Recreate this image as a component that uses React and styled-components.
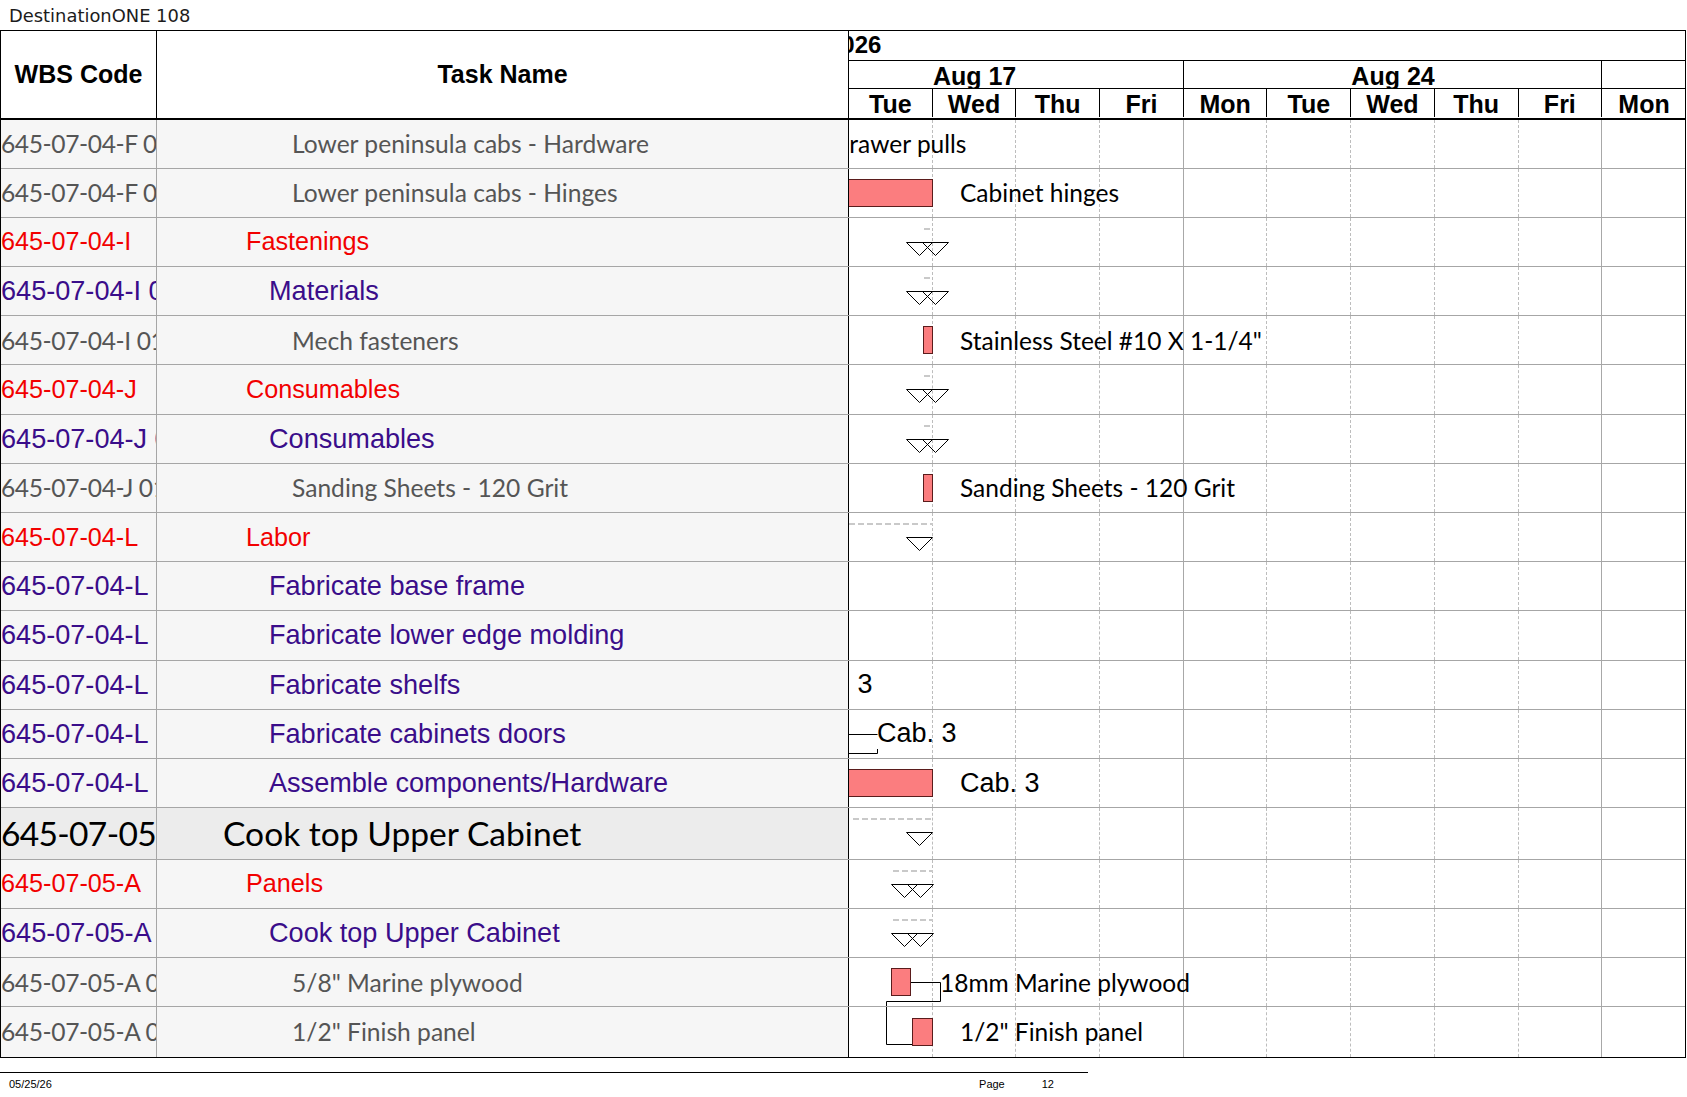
import React from "react";
import styled, { createGlobalStyle, css } from "styled-components";

const DAY = 83.7;
const CAL = `"Lato", "Liberation Sans", sans-serif`;
const ARIAL = `"Liberation Sans", Arial, sans-serif`;

const GlobalStyle = createGlobalStyle`
  html, body { margin: 0; padding: 0; background: #fff; }
  body { width: 1687px; height: 1097px; overflow: hidden; }
  *, *::before, *::after { box-sizing: border-box; }
`;

const LEVEL = {
  big: css`font-family: ${CAL}; font-size: 33.6px; color: #000;`,
  red: css`font-family: ${ARIAL}; font-size: 25.2px; color: #f20000;`,
  purple: css`font-family: ${ARIAL}; font-size: 27.1px; color: #3a0d8a;`,
  grey: css`font-family: ${CAL}; font-size: 24.6px; color: #555;`,
};
const INDENT = { big: 66, red: 89, purple: 112, grey: 135 };
const WBS_SPACING = { big: "-0.7px", red: "0", purple: "0", grey: "-0.4px" };

const Page = styled.div`
  display: flex;
  flex-direction: column;
  width: 1687px;
`;

const TitleBar = styled.div`
  height: 30px;
  padding-left: 9px;
  padding-top: 1px;
  display: flex;
  align-items: center;
  font-family: "DejaVu Sans", sans-serif;
  font-size: 17.9px;
  color: #1c1c1c;
`;

const Sheet = styled.div`
  width: 1686px;
  border-left: 1px solid #000;
  border-right: 1px solid #000;
  border-bottom: 1px solid #000;
`;

const HeaderRow = styled.div`
  display: grid;
  grid-template-columns: 156px 692px 1fr;
  height: 89.5px;
  border-top: 1px solid #000;
  border-bottom: 2px solid #000;
`;

const HeadCell = styled.div`
  display: flex;
  align-items: center;
  justify-content: center;
  border-right: 1px solid #000;
  font-family: ${ARIAL};
  font-weight: bold;
  font-size: 25px;
  color: #000;
`;

const GanttHead = styled.div`
  display: flex;
  flex-direction: column;
  overflow: hidden;
`;

const YearBand = styled.div`
  height: 29.7px;
  border-bottom: 1px solid #000;
  display: flex;
  align-items: center;
  overflow: hidden;
  font-family: ${ARIAL};
  font-weight: bold;
  font-size: 24px;
  span { margin-left: -21px; white-space: nowrap; }
`;

const Band = styled.div`
  display: flex;
  height: ${(p) => p.$h}px;
  border-bottom: ${(p) => (p.$line ? "1px solid #000" : "none")};
`;

const WeekCell = styled.div`
  flex: none;
  width: ${(p) => p.$days * DAY}px;
  border-right: ${(p) => (p.$line ? "1px solid #000" : "none")};
  display: flex;
  overflow: hidden;
`;

const WeekLabel = styled.div`
  flex: none;
  margin-left: ${(p) => -p.$lead * DAY}px;
  width: ${(p) => p.$span * DAY}px;
  text-align: center;
  font-family: ${ARIAL};
  font-weight: bold;
  font-size: 25px;
  line-height: 30px;
  white-space: nowrap;
`;

const DayHead = styled.div`
  flex: none;
  width: ${DAY}px;
  border-right: ${(p) => (p.$last ? "none" : "1px solid #000")};
  text-align: center;
  font-family: ${ARIAL};
  font-weight: bold;
  font-size: 25px;
  line-height: 30px;
`;

const Row = styled.div`
  display: grid;
  grid-template-columns: 156px 692px 1fr;
  height: ${(p) => (p.$big ? 51.7 : 49.2)}px;
  border-bottom: 1px solid #a6a6a6;
  &:last-child { border-bottom: none; }
`;

const WbsCell = styled.div`
  display: flex;
  align-items: center;
  overflow: hidden;
  white-space: nowrap;
  background: ${(p) => (p.$lvl === "big" ? "#ececec" : "#f6f6f6")};
  border-right: 1px solid #a6a6a6;
  ${(p) => LEVEL[p.$lvl]}
  letter-spacing: ${(p) => WBS_SPACING[p.$lvl]};
`;

const TaskCell = styled.div`
  display: flex;
  align-items: center;
  overflow: hidden;
  white-space: nowrap;
  padding-left: ${(p) => INDENT[p.$lvl]}px;
  background: ${(p) => (p.$lvl === "big" ? "#ececec" : "#f6f6f6")};
  border-right: 1px solid #000;
  ${(p) => LEVEL[p.$lvl]}
`;

const GanttCell = styled.div`
  position: relative;
  display: flex;
  overflow: hidden;
  background: #fff;
`;

const DayCol = styled.div`
  flex: none;
  width: ${DAY}px;
  height: 100%;
  border-right: ${(p) =>
    p.$last ? "none" : p.$week ? "1px solid #a8a8a8" : "1px dashed #bdbdbd"};
`;

const Bar = styled.div`
  position: absolute;
  left: ${(p) => p.$x}px;
  width: ${(p) => p.$w}px;
  top: 50%;
  height: 28px;
  margin-top: -14px;
  background: #fb7d7f;
  border: 1px solid #5a1c1c;
`;

const Label = styled.div`
  position: absolute;
  left: ${(p) => p.$x}px;
  top: 0;
  bottom: 0;
  display: flex;
  align-items: center;
  white-space: nowrap;
  color: #000;
  font-family: ${(p) => (p.$arial ? ARIAL : CAL)};
  font-size: ${(p) => (p.$arial ? 27 : 24.5)}px;
`;

const Summary = styled.div`
  position: absolute;
  left: ${(p) => p.$x}px;
  width: ${(p) => p.$w}px;
  top: 10px;
  height: 2px;
  background: repeating-linear-gradient(90deg, #c9c9c9 0 6px, transparent 6px 9px);
`;

const Marker = styled.svg`
  position: absolute;
  left: ${(p) => p.$x}px;
  top: 24px;
  overflow: visible;
`;

const Links = styled.svg`
  position: absolute;
  left: 0;
  top: 0;
  overflow: visible;
  pointer-events: none;
`;

const Footer = styled.div`
  width: 1088px;
  margin-top: 14px;
  height: 23px;
  border-top: 1px solid #000;
  display: flex;
  align-items: center;
  padding-left: 9px;
  font-family: ${ARIAL};
  font-size: 11px;
  color: #000;
`;

const FootSpacer = styled.div`
  flex: 1;
`;

const FootPage = styled.div`
  display: flex;
  gap: 37px;
  padding-right: 34px;
`;

function Tri({ x, double }) {
  const w = double ? 43 : 27;
  return (
    <Marker $x={x} width={w} height={14} viewBox={`0 0 ${w} 14`}>
      <polygon points="0.5,0.5 26.5,0.5 13.5,13.5" fill="none" stroke="#000" strokeWidth="1" />
      {double && (
        <polygon points="16.5,0.5 42.5,0.5 29.5,13.5" fill="none" stroke="#000" strokeWidth="1" />
      )}
    </Marker>
  );
}

function Path({ d }) {
  return (
    <Links width="200" height="60">
      {d.map((pts, i) => (
        <polyline key={i} points={pts} fill="none" stroke="#000" strokeWidth="1" />
      ))}
    </Links>
  );
}

const DAYS = ["Tue", "Wed", "Thu", "Fri", "Mon", "Tue", "Wed", "Thu", "Fri", "Mon"];
const WEEK_END = [3, 8];

const ROWS = [
  { wbs: "645-07-04-F 01", name: "Lower peninsula cabs - Hardware", lvl: "grey",
    g: [{ t: "label", x: -18, text: "Drawer pulls" }] },
  { wbs: "645-07-04-F 02", name: "Lower peninsula cabs - Hinges", lvl: "grey",
    g: [{ t: "bar", x: -10, w: 94 }, { t: "label", x: 111, text: "Cabinet hinges" }] },
  { wbs: "645-07-04-I", name: "Fastenings", lvl: "red",
    g: [{ t: "sum", x: 75, w: 7 }, { t: "tri", x: 57, double: true }] },
  { wbs: "645-07-04-I 01", name: "Materials", lvl: "purple",
    g: [{ t: "sum", x: 75, w: 7 }, { t: "tri", x: 57, double: true }] },
  { wbs: "645-07-04-I 01.01", name: "Mech fasteners", lvl: "grey",
    g: [{ t: "bar", x: 74, w: 10 }, { t: "label", x: 111, text: 'Stainless Steel #10 X 1-1/4"' }] },
  { wbs: "645-07-04-J", name: "Consumables", lvl: "red",
    g: [{ t: "sum", x: 75, w: 7 }, { t: "tri", x: 57, double: true }] },
  { wbs: "645-07-04-J 01", name: "Consumables", lvl: "purple",
    g: [{ t: "sum", x: 75, w: 7 }, { t: "tri", x: 57, double: true }] },
  { wbs: "645-07-04-J 01.01", name: "Sanding Sheets - 120 Grit", lvl: "grey",
    g: [{ t: "bar", x: 74, w: 10 }, { t: "label", x: 111, text: "Sanding Sheets - 120 Grit" }] },
  { wbs: "645-07-04-L", name: "Labor", lvl: "red",
    g: [{ t: "sum", x: 0, w: 84 }, { t: "tri", x: 57 }] },
  { wbs: "645-07-04-L", name: "Fabricate base frame", lvl: "purple", g: [] },
  { wbs: "645-07-04-L", name: "Fabricate lower edge molding", lvl: "purple", g: [] },
  { wbs: "645-07-04-L", name: "Fabricate shelfs", lvl: "purple",
    g: [{ t: "label", x: -56, text: "Cab. 3", arial: true }] },
  { wbs: "645-07-04-L", name: "Fabricate cabinets doors", lvl: "purple",
    g: [
      { t: "path", d: ["0,24.5 28.5,24.5", "0,43.5 28.5,43.5 28.5,39"] },
      { t: "label", x: 28, text: "Cab. 3", arial: true },
    ] },
  { wbs: "645-07-04-L", name: "Assemble components/Hardware", lvl: "purple",
    g: [{ t: "bar", x: -10, w: 94 }, { t: "label", x: 111, text: "Cab. 3", arial: true }] },
  { wbs: "645-07-05", name: "Cook top Upper Cabinet", lvl: "big",
    g: [{ t: "sum", x: 4, w: 80 }, { t: "tri", x: 57 }] },
  { wbs: "645-07-05-A", name: "Panels", lvl: "red",
    g: [{ t: "sum", x: 44, w: 40 }, { t: "tri", x: 42, double: true }] },
  { wbs: "645-07-05-A 01", name: "Cook top Upper Cabinet", lvl: "purple",
    g: [{ t: "sum", x: 44, w: 40 }, { t: "tri", x: 42, double: true }] },
  { wbs: "645-07-05-A 01.01", name: '5/8" Marine plywood', lvl: "grey",
    g: [
      { t: "bar", x: 42, w: 20 },
      { t: "path", d: ["62,24.5 91.5,24.5 91.5,43.5 37.5,43.5 37.5,60"] },
      { t: "label", x: 91, text: "18mm Marine plywood" },
    ] },
  { wbs: "645-07-05-A 01.02", name: '1/2" Finish panel', lvl: "grey",
    g: [
      { t: "path", d: ["37.5,0 37.5,37.5 63,37.5"] },
      { t: "bar", x: 63, w: 21 },
      { t: "label", x: 111, text: '1/2" Finish panel' },
    ] },
];

function GanttItem({ it }) {
  switch (it.t) {
    case "bar":
      return <Bar $x={it.x} $w={it.w} />;
    case "label":
      return <Label $x={it.x} $arial={it.arial}>{it.text}</Label>;
    case "sum":
      return <Summary $x={it.x} $w={it.w} />;
    case "tri":
      return <Tri x={it.x} double={it.double} />;
    case "path":
      return <Path d={it.d} />;
    default:
      return null;
  }
}

function DayGrid() {
  return DAYS.map((d, i) => (
    <DayCol key={i} $week={WEEK_END.includes(i)} $last={i === DAYS.length - 1} />
  ));
}

export default function App() {
  return (
    <Page>
      <GlobalStyle />
      <TitleBar>DestinationONE 108</TitleBar>
      <Sheet>
        <HeaderRow>
          <HeadCell>WBS Code</HeadCell>
          <HeadCell>Task Name</HeadCell>
          <GanttHead>
            <YearBand>
              <span>2026</span>
            </YearBand>
            <Band $h={28.6} $line>
              <WeekCell $days={4} $line>
                <WeekLabel $lead={1} $span={5}>Aug 17</WeekLabel>
              </WeekCell>
              <WeekCell $days={5} $line>
                <WeekLabel $lead={0} $span={5}>Aug 24</WeekLabel>
              </WeekCell>
              <WeekCell $days={1}>
                <WeekLabel $lead={0} $span={5}>Aug 31</WeekLabel>
              </WeekCell>
            </Band>
            <Band $h={28.2}>
              {DAYS.map((d, i) => (
                <DayHead key={i} $last={i === DAYS.length - 1}>{d}</DayHead>
              ))}
            </Band>
          </GanttHead>
        </HeaderRow>
        {ROWS.map((r, i) => (
          <Row key={i} $big={r.lvl === "big"}>
            <WbsCell $lvl={r.lvl}>{r.wbs}</WbsCell>
            <TaskCell $lvl={r.lvl}>{r.name}</TaskCell>
            <GanttCell>
              <DayGrid />
              {r.g.map((it, j) => (
                <GanttItem key={j} it={it} />
              ))}
            </GanttCell>
          </Row>
        ))}
      </Sheet>
      <Footer>
        <span>05/25/26</span>
        <FootSpacer />
        <FootPage>
          <span>Page</span>
          <span>12</span>
        </FootPage>
      </Footer>
    </Page>
  );
}
